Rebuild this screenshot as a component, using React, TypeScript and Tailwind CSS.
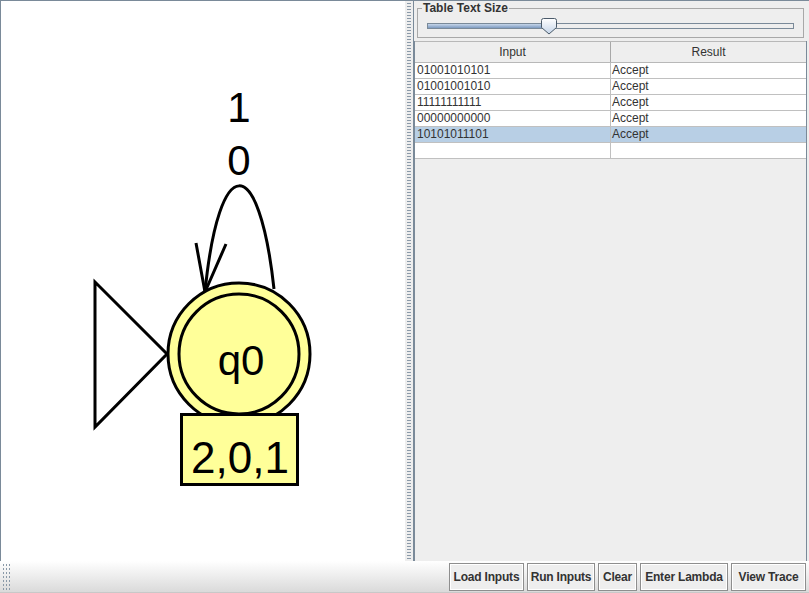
const rows = [
  { input: '01001010101', result: 'Accept' },
  { input: '01001001010', result: 'Accept' },
  { input: '11111111111', result: 'Accept' },
  { input: '00000000000', result: 'Accept' },
  { input: '10101011101', result: 'Accept', selected: true },
  { input: '', result: '' },
];

const buttons = [
  { label: 'Load Inputs', w: 'w-[75px]' },
  { label: 'Run Inputs', w: 'w-[68px]' },
  { label: 'Clear', w: 'w-[39px]' },
  { label: 'Enter Lambda', w: 'w-[88px]' },
  { label: 'View Trace', w: 'w-[75px]' },
];

function Canvas() {
  return (
    <svg width="404" height="560" viewBox="0 0 404 560" className="block">
      <g fontFamily="'Liberation Sans', Arial, sans-serif" fill="#000">
        <text x="238" y="121" fontSize="42" textAnchor="middle">1</text>
        <text x="238" y="174" fontSize="42" textAnchor="middle">0</text>
      </g>
      <path d="M 204 291 C 218 150, 258 150, 273 288" fill="none" stroke="#000" strokeWidth="3" />
      <path d="M 195 242 L 204 291 L 225 243" fill="none" stroke="#000" strokeWidth="3" />
      <polygon points="94,281 94,426 166,353" fill="#fff" stroke="#000" strokeWidth="3" />
      <circle cx="238" cy="353" r="71" fill="#ffff99" stroke="#000" strokeWidth="3" />
      <circle cx="238" cy="353" r="60" fill="#ffff99" stroke="#000" strokeWidth="3" />
      <text x="240" y="374" fontSize="42" textAnchor="middle" fontFamily="'Liberation Sans', Arial, sans-serif">q0</text>
      <rect x="180.5" y="413.5" width="116" height="70" fill="#ffff99" stroke="#000" strokeWidth="3" />
      <text x="239" y="472" fontSize="44" textAnchor="middle" fontFamily="'Liberation Sans', Arial, sans-serif">2,0,1</text>
    </svg>
  );
}

function Slider() {
  return (
    <div className="relative h-[16px] mx-[9px] mt-[3px]">
      <div className="absolute left-0 right-0 top-[5px] h-[6px] border border-[#7a8a99] bg-[#eeeeee]" />
      <div className="absolute left-0 w-[120px] top-[5px] h-[6px] border border-[#7a8a99] bg-[linear-gradient(#c6d6ea,#7d9ac0)]" />
      <svg className="absolute left-[114px] top-0" width="16" height="17" viewBox="0 0 16 17">
        <defs>
          <linearGradient id="thumb" x1="0" y1="0" x2="0" y2="1">
            <stop offset="0" stopColor="#ffffff" />
            <stop offset="1" stopColor="#c4d4e8" />
          </linearGradient>
        </defs>
        <path d="M 2.5 0.5 L 13.5 0.5 Q 15.5 0.5 15.5 2.5 L 15.5 9.5 L 8 16 L 0.5 9.5 L 0.5 2.5 Q 0.5 0.5 2.5 0.5 Z" fill="url(#thumb)" stroke="#4a5a6a" />
      </svg>
    </div>
  );
}

export default function App() {
  return (
    <div className="w-[809px] h-[593px] flex flex-col bg-[#eeeeee] overflow-hidden font-['Liberation_Sans',Arial,sans-serif] text-[12px]">
      <div className="flex h-[561px]">
        <div className="w-[405px] border-t border-l border-[#7a8a99] bg-white">
          <Canvas />
        </div>
        <div className="w-[8px] bg-[#eeeeee] flex justify-center border-t border-[#7a8a99]">
          <div className="w-[4px] mt-[1px] bg-[radial-gradient(circle,#8a99a8_0.7px,transparent_0.9px)] bg-[length:2px_3px]" />
        </div>
        <div className="flex-1 flex flex-col border-t border-l border-[#7a8a99] pr-[2px]">
          <div className="mx-[3px] mt-[7px] h-[30px] border border-[#a8a8a8] relative">
            <span className="absolute left-[4px] top-[-8px] px-[1px] bg-[#eeeeee] font-bold text-[#333333] leading-[14px]">Table Text Size</span>
            <div className="pt-[6px]">
              <Slider />
            </div>
          </div>
          <div className="mt-[3px] flex-1 border-l border-r border-[#7a8a99] flex flex-col">
            <div className="flex h-[22px] border-t border-[#b8b8b8] bg-[#eeeeee] border-b border-[#a0a0a0]">
              <div className="w-[196px] flex items-center justify-center text-[#333333] border-r border-[#a8a8a8]">Input</div>
              <div className="flex-1 flex items-center justify-center text-[#333333]">Result</div>
            </div>
            {rows.map((r, i) => (
              <div key={i} className={`flex h-[16px] border-b border-[#c0c0c0] ${r.selected ? 'bg-[#b8cfe5]' : 'bg-white'}`}>
                <div className="w-[196px] pl-[2px] leading-[15px] text-[#333333] border-r border-[#c0c0c0]">{r.input}</div>
                <div className="flex-1 pl-[1px] leading-[15px] text-[#333333]">{r.result}</div>
              </div>
            ))}
            <div className="flex-1 bg-[#eeeeee]" />
          </div>
        </div>
      </div>
      <div className="h-[32px] flex items-center bg-[linear-gradient(#ffffff,#dadada)] border-b border-[#c8c8c8]">
        <div className="ml-[2px] w-[10px] h-[28px] bg-[radial-gradient(circle,#8a99a8_0.7px,transparent_0.9px)] bg-[length:3px_4px]" />
        <div className="flex-1" />
        <div className="flex gap-[3px] mr-[3px]">
          {buttons.map((b) => (
            <div key={b.label} className={`${b.w} h-[28px] flex items-center justify-center whitespace-nowrap tracking-[-0.2px] border border-[#8e8e8e] bg-[#eeeeee] shadow-[inset_1px_1px_0_#ffffff,inset_-1px_-1px_0_#ffffff] font-bold text-[#333333]`}>
              {b.label}
            </div>
          ))}
        </div>
      </div>
    </div>
  );
}
